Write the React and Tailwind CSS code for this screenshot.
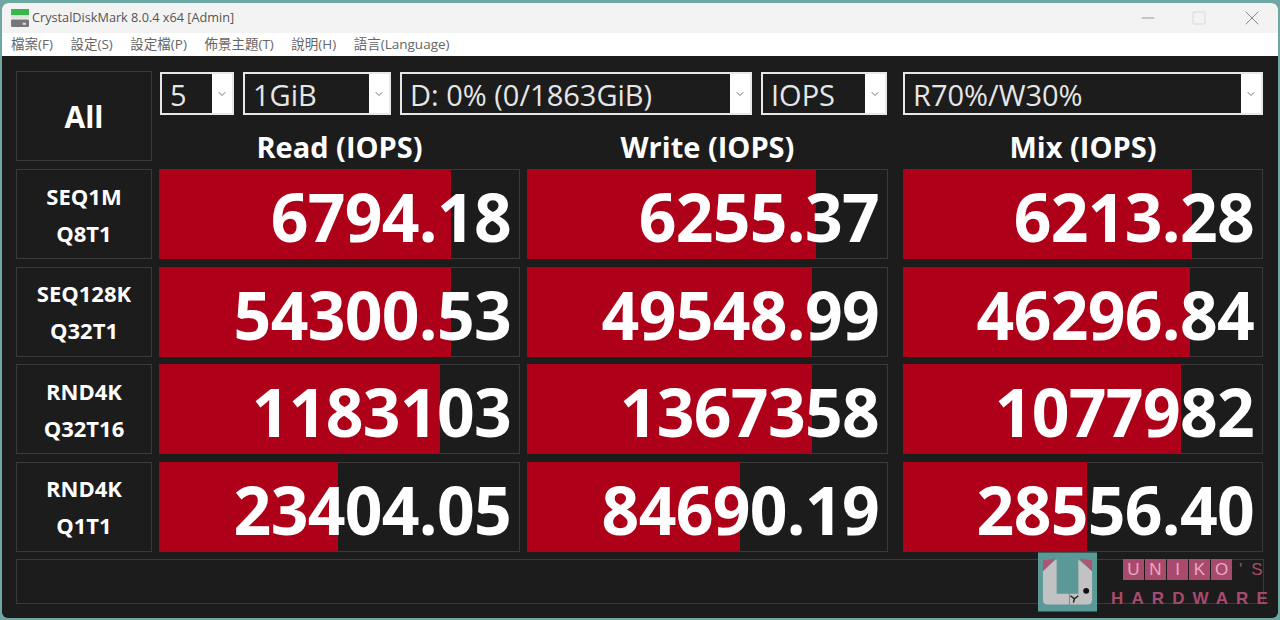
import { ChevronDown, Minus, Square, X } from "lucide-react";

const selects = [
  { label: "5", width: "w-[74px]" },
  { label: "1GiB", width: "w-[148px]" },
  { label: "D: 0% (0/1863GiB)", width: "w-[352px]" },
  { label: "IOPS", width: "w-[126px]" },
];

const rows = [
  {
    name: ["SEQ1M", "Q8T1"],
    values: [
      { text: "6794.18", bar: 292 },
      { text: "6255.37", bar: 289 },
      { text: "6213.28", bar: 289 },
    ],
  },
  {
    name: ["SEQ128K", "Q32T1"],
    values: [
      { text: "54300.53", bar: 292 },
      { text: "49548.99", bar: 285 },
      { text: "46296.84", bar: 287 },
    ],
  },
  {
    name: ["RND4K", "Q32T16"],
    values: [
      { text: "1183103", bar: 281 },
      { text: "1367358", bar: 285 },
      { text: "1077982", bar: 278 },
    ],
  },
  {
    name: ["RND4K", "Q1T1"],
    values: [
      { text: "23404.05", bar: 179 },
      { text: "84690.19", bar: 213 },
      { text: "28556.40", bar: 184 },
    ],
  },
];

const menus = ["檔案(F)", "設定(S)", "設定檔(P)", "佈景主題(T)", "說明(H)", "語言(Language)"];

const font = "font-['Open_Sans','Noto_Sans_CJK_TC',sans-serif]";

const Select = ({ label, width }) => (
  <div className={`${width} h-[43px] flex border-2 border-[#e8e8e8] bg-white`}>
    <div className="flex-1 bg-[#1c1c1c] text-[#e6e6e6] text-[29px] leading-[42px] pl-2 whitespace-nowrap overflow-hidden">
      {label}
    </div>
    <div className="w-[20px] flex items-center justify-center">
      <ChevronDown className="w-3 h-3 text-gray-500" />
    </div>
  </div>
);

const Score = ({ text, bar, width = "w-[361px]" }) => (
  <div className={`relative ${width} h-[90px] border border-[#3a3a3a] bg-[#1c1c1c]`}>
    <div
      className="absolute -left-px -top-px -bottom-px bg-[#ae0018]"
      style={{ width: bar }}
    />
    <div className="relative h-full flex items-center justify-end pr-2 pt-[4px] text-white font-bold text-[66px] tracking-[-0.7px] leading-none whitespace-nowrap">
      {text}
    </div>
  </div>
);

const Logo = () => (
  <svg viewBox="0 0 60 60" className="w-[59px] h-[60px] opacity-95">
    <rect width="60" height="60" fill="#5f9f9f" />
    <path d="M5 19 L18 7 H19 V42 H31.5 V53 H10 Q5 53 5 48 Z" fill="#cbcbcb" />
    <path d="M41 7 L55 19 V48 Q55 53 50 53 H32.5 V42 H41 Z" fill="#cbcbcb" />
    <path d="M5 8 L18 6 L5 19 Z" fill="#b8587a" />
    <path d="M42 6 L55 8 V19 Z" fill="#b8587a" />
    <circle cx="49" cy="39" r="3" fill="#111" />
    <path d="M33 44 L37 47 L41 44 M37 47 L36 51" stroke="#222" strokeWidth="1.5" fill="none" />
  </svg>
);

export default function App() {
  return (
    <div className={`${font} w-[1280px] h-[620px] bg-[#6fa8a3] pt-[3px] px-[2px] overflow-hidden`}>
      <div className="relative w-[1276px] h-[615px] rounded-md overflow-hidden flex flex-col bg-[#1c1c1c]">
        {/* Title bar */}
        <div className="h-[30px] shrink-0 bg-[#f3f3f3] flex items-center pl-2 text-[#555] text-[12.7px]">
          <svg viewBox="0 0 18 18" className="w-[19px] h-[19px] mr-[3px]">
            <rect x="1" y="0" width="17" height="6" fill="#39b54a" />
            <rect x="1" y="6" width="17" height="3" fill="#d5e8d5" />
            <rect x="1" y="10" width="17" height="7" rx="1" fill="#777" />
            <rect x="12" y="13" width="3" height="2" fill="#ddd" />
          </svg>
          <span>CrystalDiskMark 8.0.4 x64 [Admin]</span>
          <div className="ml-auto flex items-center text-[#888]">
            <Minus className="w-[20px] h-[20px] mr-[33px]" strokeWidth={1} />
            <Square className="w-[16px] h-[16px] mr-[33px] text-[#ccc]" strokeWidth={1} />
            <X className="w-[24px] h-[24px] mr-[14px]" strokeWidth={1} />
          </div>
        </div>

        {/* Menu */}
        <div className="h-[23px] shrink-0 bg-white flex items-center gap-[17.5px] pl-[9px] text-[#666] text-[13.5px]">
          {menus.map((m) => (
            <span key={m}>{m}</span>
          ))}
        </div>

        {/* Main panel */}
        <div className="flex-1 pt-[15px] pl-[14px]">
          <div className="flex gap-[7px]">
            <div className="w-[136px] h-[90px] pt-px border border-[#3a3a3a] flex items-center justify-center text-white text-[30px] font-bold">
              All
            </div>
            <div className="h-[90px] pt-px">
              <div className="flex">
                <div className="flex gap-[9px] w-[743px] ml-px">
                  {selects.map((s) => (
                    <Select key={s.label} {...s} />
                  ))}
                </div>
                <Select label="R70%/W30%" width="w-[360px]" />
              </div>
              <div className="flex mt-[12px] text-white text-[29px] font-bold leading-[40px] text-center">
                <div className="w-[361px]">Read (IOPS)</div>
                <div className="w-[361px] ml-[7px]">Write (IOPS)</div>
                <div className="w-[360px] ml-[15px]">Mix (IOPS)</div>
              </div>
            </div>
          </div>

          <div className="flex flex-col gap-[7.5px] mt-[8px]">
            {rows.map((row) => (
              <div key={row.values[0].text} className="flex">
                <div className="w-[136px] h-[90px] mr-[7px] pt-px border border-[#3a3a3a] flex flex-col items-center justify-center text-white text-[22px] font-bold leading-[37px]">
                  <span>{row.name[0]}</span>
                  <span>{row.name[1]}</span>
                </div>
                <Score {...row.values[0]} />
                <div className="ml-[7px]">
                  <Score {...row.values[1]} />
                </div>
                <div className="ml-[15px]">
                  <Score {...row.values[2]} width="w-[360px]" />
                </div>
              </div>
            ))}
          </div>

          <div className="w-[1248px] h-[45px] mt-[7px] border border-[#3a3a3a]" />
        </div>

        {/* Watermark */}
        <div className="absolute left-[1036px] top-[549px]">
          <Logo />
        </div>
        <div className="absolute left-[1121px] top-[556px] flex items-center text-[#e9a8c0] text-[17px] leading-[21px] font-['Liberation_Sans',sans-serif]">
          {["U", "N", "I", "K", "O"].map((c) => (
            <span key={c} className="w-[21px] h-[21px] mr-px bg-[#a84a6e] text-center">
              {c}
            </span>
          ))}
          <span className="ml-[6px] text-[#a84a6e] tracking-[9px]">'S</span>
        </div>
        <div className="absolute left-[1109px] top-[586px] text-[#a84a6e] text-[17px] font-bold leading-[20px] tracking-[8.1px] whitespace-nowrap font-['Liberation_Sans',sans-serif]">
          HARDWARE
        </div>
      </div>
    </div>
  );
}
